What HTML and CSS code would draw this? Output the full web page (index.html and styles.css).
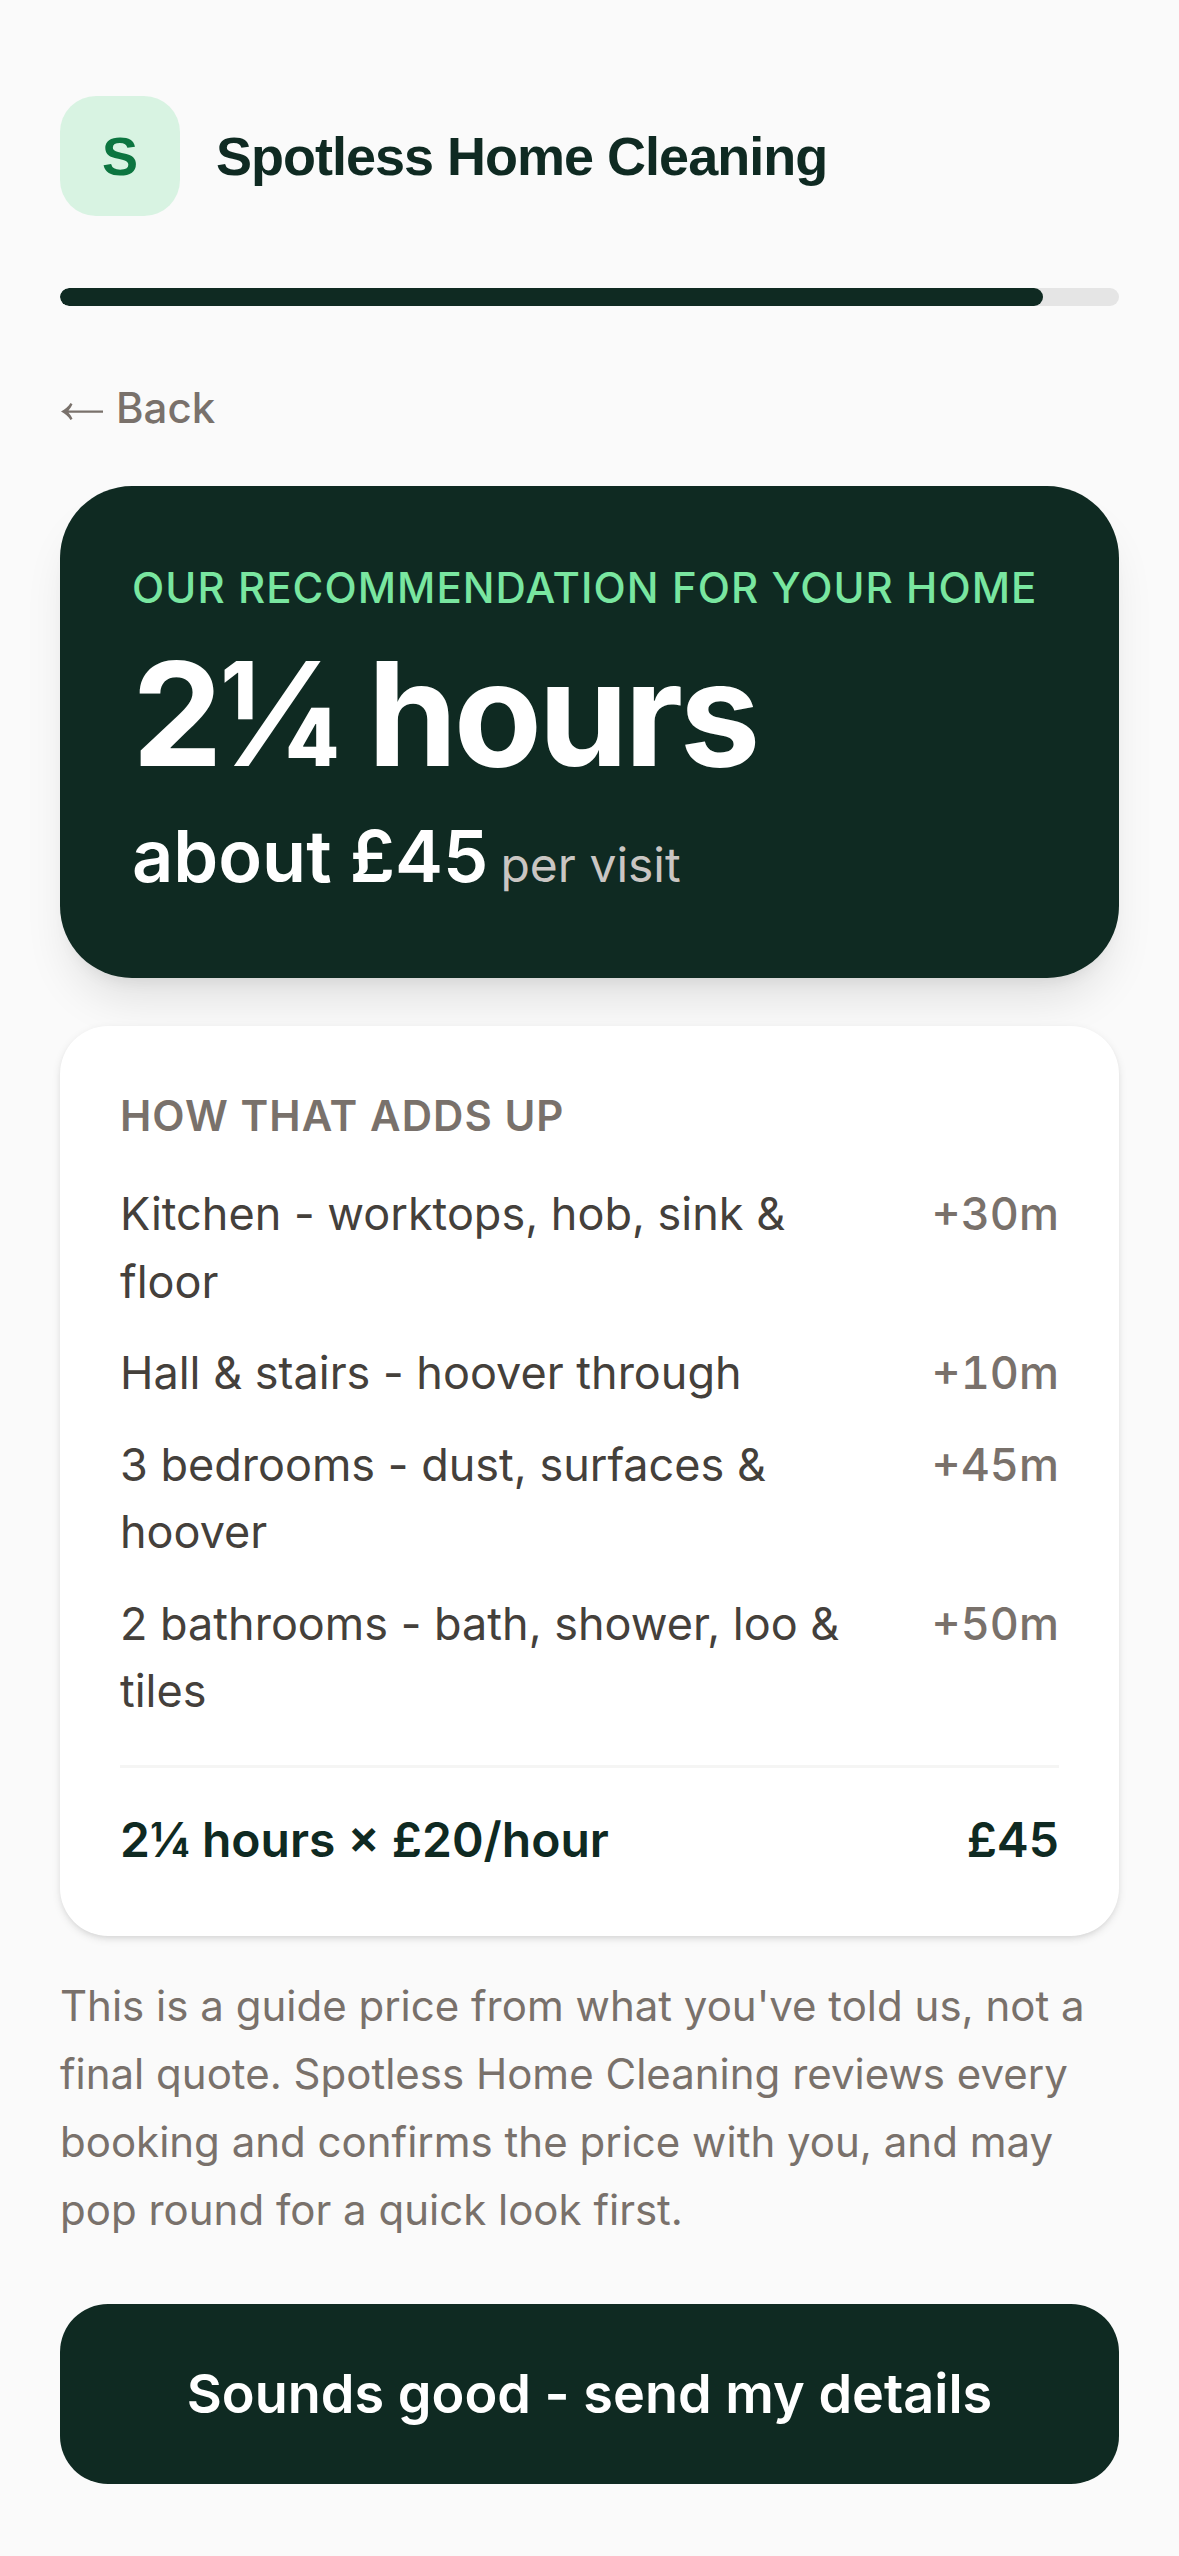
FILE: index.html
```html
<!DOCTYPE html>
<html lang="en">
<head>
<meta charset="utf-8">
<meta name="viewport" content="width=device-width, initial-scale=1">
<title>Spotless Home Cleaning</title>
<link rel="stylesheet" href="styles.css">
</head>
<body>
<main class="page">
  <header class="brand">
    <span class="brand-mark" aria-hidden="true">S</span>
    <span class="brand-name">Spotless Home Cleaning</span>
  </header>
  <div class="progress" role="progressbar" aria-label="Booking progress" aria-valuenow="13" aria-valuemin="0" aria-valuemax="14">
    <div class="progress-fill" style="width: 92.86%"></div>
  </div>
  <button class="back" type="button">
    <svg class="back-arrow" viewBox="0 0 44 30" fill="currentColor" aria-hidden="true"><path d="M1 18.5C5 16.5 8.500 13.500 10.500 10L12.500 11.200C11.500 13.500 10.200 15.600 8.500 17.400H43V19.700H8.500C10.200 21.500 11.500 23.500 12.500 25.800L10.500 27C8.500 23.500 5 20.500 1 18.500Z"/></svg>
    Back
  </button>
  <section class="quote">
    <p class="quote-label">Our recommendation for your home</p>
    <h1 class="quote-hours">2¼ hours</h1>
    <p class="quote-price">about £45 <span class="quote-unit">per visit</span></p>
  </section>
  <section class="breakdown">
    <h2 class="breakdown-title">How that adds up</h2>
    <ul class="tasks">
      <li class="task"><span>Kitchen - worktops, hob, sink &amp; floor</span><span class="task-time">+30m</span></li>
      <li class="task"><span>Hall &amp; stairs - hoover through</span><span class="task-time">+10m</span></li>
      <li class="task"><span>3 bedrooms - dust, surfaces &amp; hoover</span><span class="task-time">+45m</span></li>
      <li class="task"><span>2 bathrooms - bath, shower, loo &amp; tiles</span><span class="task-time">+50m</span></li>
    </ul>
    <div class="total"><span>2¼ hours × £20/hour</span><span>£45</span></div>
  </section>
  <p class="note">This is a guide price from what you've told us, not a final quote. Spotless Home Cleaning reviews every booking and confirms the price with you, and may pop round for a quick look first.</p>
  <button class="submit" type="button">Sounds good - send my details</button>
</main>
</body>
</html>
```

FILE: styles.css
```css
* { box-sizing: border-box; margin: 0; padding: 0; }

body {
  background: #fafafa;
  color: #0f2a22;
  font-family: Inter, "Liberation Sans", sans-serif;
}

button { border: 0; font: inherit; cursor: pointer; }

.page {
  display: flex;
  flex-direction: column;
  padding: 96px 60px 72px;
}

.brand {
  display: flex;
  align-items: center;
  gap: 36px;
  font-family: "Liberation Sans", Arial, sans-serif;
  font-size: 54px;
  font-weight: 700;
  line-height: 72px;
}

.brand-mark {
  display: flex;
  align-items: center;
  justify-content: center;
  width: 120px;
  height: 120px;
  border-radius: 36px;
  background: #d8f3e2;
  color: #0c7540;
}

.brand-name { letter-spacing: -1px; }

.progress {
  height: 18px;
  margin-top: 72px;
  border-radius: 9px;
  background: #e5e5e5;
  overflow: hidden;
}

.progress-fill { height: 100%; border-radius: 9px; background: #0f2a22; }

.back {
  display: flex;
  align-items: center;
  align-self: flex-start;
  gap: 12px;
  margin-top: 72px;
  background: none;
  color: #79716b;
  font-size: 42px;
  font-weight: 500;
  line-height: 60px;
}

.back-arrow { width: 44px; height: 30px; }

.quote {
  margin-top: 48px;
  padding: 72px 72px 74px;
  border-radius: 72px;
  background: #0f2a22;
  color: #fff;
  box-shadow: 0 30px 45px -9px rgb(0 0 0 / 10%), 0 12px 18px -12px rgb(0 0 0 / 10%);
}

.quote-label {
  color: #79e6a0;
  font-size: 42px;
  font-weight: 500;
  line-height: 60px;
  letter-spacing: 0.025em;
  text-transform: uppercase;
}

.quote-hours {
  margin-top: 24px;
  font-size: 144px;
  font-weight: 700;
  line-height: 144px;
  letter-spacing: -0.025em;
}

.quote-price { margin-top: 22px; font-size: 72px; font-weight: 600; line-height: 96px; }

.quote-unit { margin-left: -6px; color: #cac6c3; font-size: 48px; font-weight: 400; line-height: 48px; }

.breakdown {
  margin-top: 48px;
  padding: 60px;
  border-radius: 48px;
  background: #fff;
  box-shadow: 0 3px 9px rgb(0 0 0 / 10%), 0 3px 6px -3px rgb(0 0 0 / 10%);
}

.breakdown-title {
  color: #79716b;
  font-size: 42px;
  font-weight: 600;
  line-height: 60px;
  letter-spacing: 0.025em;
  text-transform: uppercase;
}

.tasks { display: grid; gap: 24px; margin-top: 34px; list-style: none; }

.task {
  display: flex;
  justify-content: space-between;
  gap: 72px;
  color: #44403b;
  font-size: 45px;
  line-height: 1.5;
}

.task-time { color: #79716b; font-weight: 500; font-variant-numeric: tabular-nums; }

.total {
  display: flex;
  justify-content: space-between;
  margin-top: 40px;
  padding-top: 36px;
  border-top: 3px solid #f5f5f4;
  font-size: 48px;
  font-weight: 600;
  line-height: 72px;
}

.note { margin-top: 36px; color: #79716b; font-size: 42px; line-height: 68px; }

.submit {
  margin-top: 60px;
  padding: 54px;
  border-radius: 48px;
  background: #0f2a22;
  color: #fff;
  font-size: 54px;
  font-weight: 600;
  line-height: 72px;
}
```
